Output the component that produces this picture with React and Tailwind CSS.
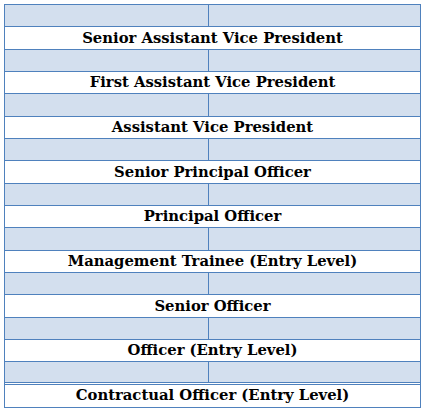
const TITLES = [
  'Senior Assistant Vice President',
  'First Assistant Vice President',
  'Assistant Vice President',
  'Senior Principal Officer',
  'Principal Officer',
  'Management Trainee (Entry Level)',
  'Senior Officer',
  'Officer (Entry Level)',
  'Contractual Officer (Entry Level)',
]

export default function App() {
  return (
    <div className="bg-white w-[424px] h-[410px] pt-1 pl-1">
      <div className="w-[417px] border border-[#4f81bd] flex flex-col font-['DejaVu_Serif',serif] text-[14.8px] font-bold text-black">
        {TITLES.map((t, i) => {
          const last = i === TITLES.length - 1
          return (
            <div key={t} className="flex flex-col">
              <div className={`grid grid-cols-[204px_1fr] h-[22.33px] bg-[#d3dfee] bg-clip-padding ${last ? 'border-b-[3px] border-double' : 'border-b'} border-[#4f81bd]`}>
                <div className="border-r border-[#4f81bd]" />
                <div />
              </div>
              <div className={`h-[22.33px] flex items-center justify-center leading-none ${last ? '' : 'border-b border-[#4f81bd]'}`}>
                {t}
              </div>
            </div>
          )
        })}
      </div>
    </div>
  )
}
